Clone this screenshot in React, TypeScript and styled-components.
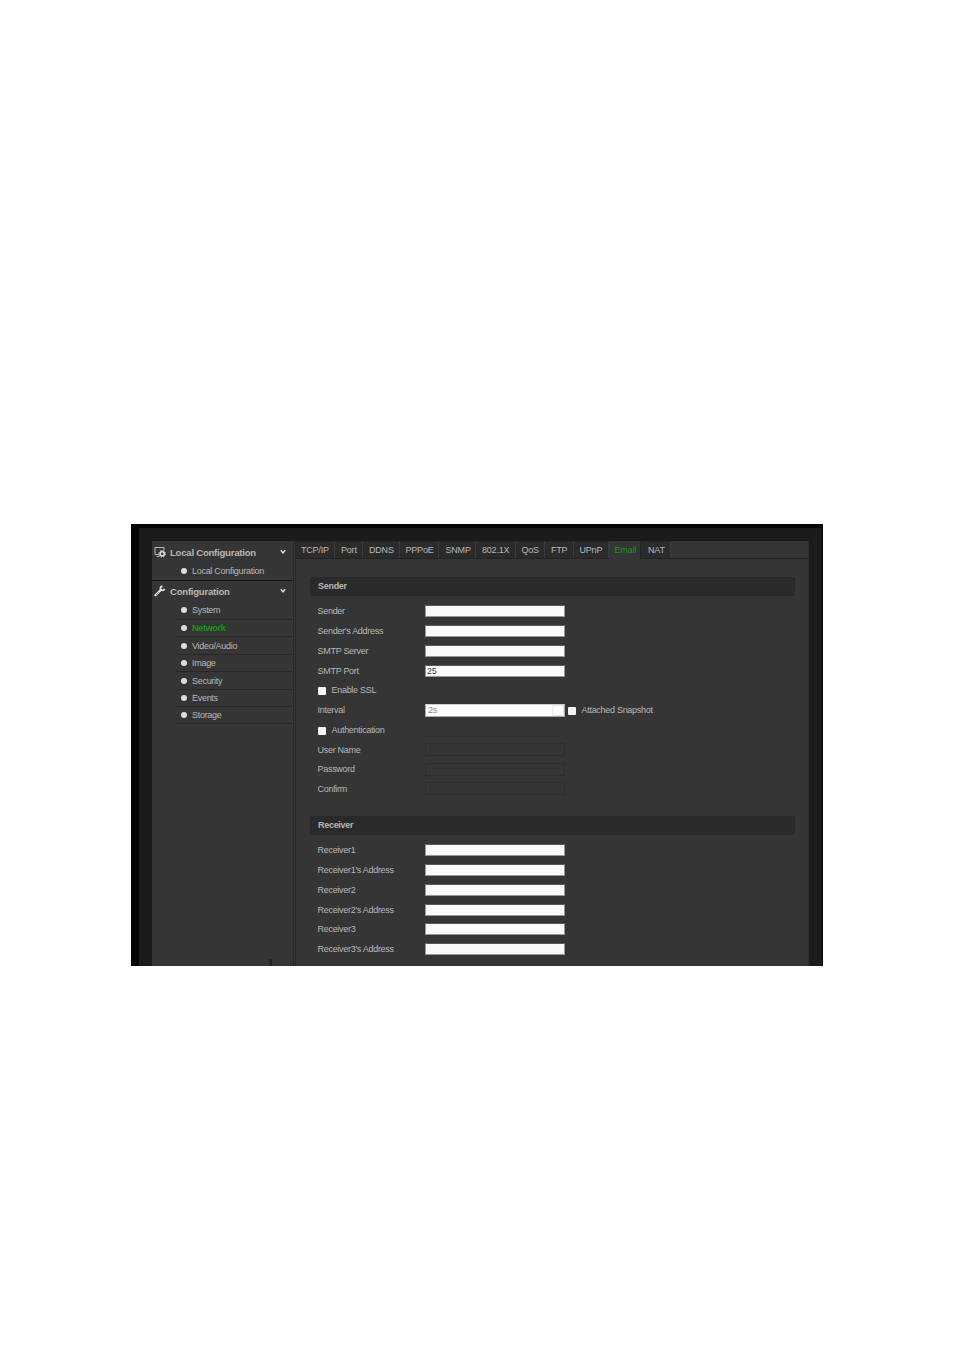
import React from 'react';
import styled, { createGlobalStyle } from 'styled-components';

const GlobalStyle = createGlobalStyle`
  *, *::before, *::after { box-sizing: border-box; }
  body { margin: 0; background: #fff; font-family: "Liberation Sans", Arial, sans-serif; font-size: 9px; letter-spacing: -0.29px; color: #b8b8b8; }
`;

const Page = styled.div`
  height: 1349px;
  padding: 524px 131px 0;
`;
const Frame = styled.div`
  width: 692px;
  height: 442px;
  padding: 4px 1px 0 8px;
  background: #030303;
`;
const Surround = styled.div`
  height: 438px;
  padding: 13px 13px 0;
  background: #1b1b1b;
`;
const Panel = styled.div`
  display: flex;
  height: 425px;
  background: #353535;
`;
const Sidebar = styled.nav`
  display: flex;
  flex-direction: column;
  width: 144px;
  border-right: 1px solid #292929;
  box-shadow: inset -1px 0 #353535, inset -2px 0 #2a2a2a;
`;
const Group = styled.div<{ $h: number }>`
  display: flex;
  align-items: center;
  height: ${p => p.$h}px;
  padding: 0 9px 0 2px;
  font-size: 9.6px;
  letter-spacing: -0.25px;
  font-weight: 700;
  white-space: nowrap;
  svg { flex: none; }
`;
const GroupTitle = styled.span`
  flex: 1;
  padding-left: 4px;
`;
const Item = styled.div<{ $h: number; $active?: boolean; $line?: string }>`
  display: flex;
  align-items: center;
  gap: 5px;
  height: ${p => p.$h}px;
  margin-left: 24px;
  margin-right: 3px;
  padding-left: 5px;
  border-bottom: 1px solid ${p => p.$line ?? '#272727'};
  color: ${p => (p.$active ? '#109a14' : '#b8b8b8')};
  font-weight: ${p => (p.$active ? 700 : 400)};
  white-space: nowrap;
  &::before {
    content: '';
    width: 6px;
    height: 6px;
    border-radius: 50%;
    background: #dedede;
  }
`;
const Separator = styled.div`
  height: 1px;
  margin-right: 3px;
  background: #161616;
`;
const Grip = styled.div`
  width: 3px;
  height: 7px;
  margin: auto 0 0 117px;
  background: #242424;
`;
const Main = styled.main`
  flex: 1;
  border-right: 1px solid #2c2c2c;
`;
const Tabs = styled.div`
  display: flex;
  height: 18px;
  border-bottom: 1px solid #222;
`;
const Tab = styled.div<{ $w: number; $pad: number; $active?: boolean }>`
  width: ${p => p.$w}px;
  height: ${p => (p.$active ? 18 : 17)}px;
  padding-left: ${p => p.$pad}px;
  line-height: 16px;
  letter-spacing: -0.2px;
  white-space: nowrap;
  background: ${p => (p.$active ? '#353535' : '#2b2b2b')};
  color: ${p => (p.$active ? '#109a14' : '#b8b8b8')};
  border-top: 1px solid ${p => (p.$active ? '#353535' : '#272727')};
  border-right: 1px solid ${p => (p.$active ? '#222' : '#3b3b3b')};
`;
const Content = styled.div`
  padding: 18px 13px 0 14px;
`;
const Heading = styled.h2`
  height: 19px;
  margin: 0;
  padding-left: 8px;
  background: #2a2a2a;
  font-size: 9px;
  line-height: 19px;
  font-weight: 700;
`;
const Rows = styled.div<{ $after?: number }>`
  padding: 5px 0 0 7.5px;
  margin-bottom: ${p => p.$after ?? 0}px;
`;
const Row = styled.div<{ $h: number }>`
  display: flex;
  align-items: center;
  height: ${p => p.$h}px;
  white-space: nowrap;
`;
const Label = styled.label`
  width: 107.5px;
`;
const Field = styled.input<{ $h?: number }>`
  width: 140px;
  height: ${p => p.$h ?? 12}px;
  padding: 0 0 0 1px;
  border: 1px solid #969696;
  border-top-color: #5a5a5a;
  border-radius: 0;
  background: #fafafa;
  color: #444;
  font: 9px "Liberation Sans", Arial, sans-serif;
  letter-spacing: -0.2px;
  &:disabled {
    background: transparent;
    border-color: #2e2e2e;
  }
`;
const Select = styled.div`
  display: flex;
  align-items: center;
  justify-content: space-between;
  width: 140px;
  height: 13px;
  padding-left: 2px;
  border: 1px solid #a9a9a9;
  border-top-color: #d0d0d0;
  background: #fff;
  color: #888;
  &::after {
    content: '';
    width: 12px;
    height: 11px;
    border: 1px solid #e6e6e6;
    border-radius: 2px;
  }
`;
const Check = styled.span<{ $left?: number }>`
  width: 8px;
  height: 8px;
  margin: 2px 5px 0 ${p => p.$left ?? 0}px;
  border-radius: 1px;
  background: #f4f4f4;
`;
const Caption = styled.span`
  padding-left: 0.5px;
`;

const Chevron = () => (
  <svg width="6" height="6" viewBox="0 0 6 6" fill="none" stroke="#e8e8e8" strokeWidth="1.3">
    <path d="M.8 1.2 3 4 5.2 1.2" />
  </svg>
);
const MonitorIcon = () => (
  <svg width="12" height="12" viewBox="0 0 12 12" fill="none">
    <path d="M5 8.5H1v-7h9v3" stroke="#b9b9b9" />
    <path d="M2.5 10.5h3" stroke="#aaa" />
    <circle cx="8.2" cy="7.8" r="2.1" stroke="#d4d4d4" strokeWidth="1.7" />
    <circle cx="8.2" cy="7.8" r="3.3" stroke="#d4d4d4" strokeWidth="1" strokeDasharray="1.3 1.3" />
  </svg>
);
const WrenchIcon = () => (
  <svg width="12" height="12" viewBox="0 0 12 12" fill="none">
    <path d="M1.5 10.3 7 4.8" stroke="#e9eef5" strokeWidth="2.2" strokeLinecap="round" />
    <path d="M8.6 1.3C6.7 1.3 6 2.8 6.5 4.2c.5 1.5 3 1.8 4.2-.2" stroke="#dce3ec" strokeWidth="1.7" />
    <path d="m2 10 3.2-3.2" stroke="#53657b" strokeWidth=".6" />
  </svg>
);

const tabs: [string, number, number][] = [
  ['TCP/IP', 39, 5], ['Port', 28, 6], ['DDNS', 37, 6], ['PPPoE', 39, 5.5], ['SNMP', 37, 6.5],
  ['802.1X', 40, 6], ['QoS', 29, 5.5], ['FTP', 29, 6], ['UPnP', 35, 5.5], ['Email', 32, 5.5], ['NAT', 30, 7],
];
const menu: [string, number][] = [
  ['System', 18], ['Network', 17], ['Video/Audio', 18], ['Image', 17], ['Security', 18], ['Events', 17], ['Storage', 17],
];
const receivers: [string, number][] = [
  ['Receiver1', 20], ["Receiver1's Address", 20], ['Receiver2', 20],
  ["Receiver2's Address", 19], ['Receiver3', 20], ["Receiver3's Address", 20],
];

export default function App() {
  return (
    <Page>
      <GlobalStyle />
      <Frame>
        <Surround>
          <Panel>
            <Sidebar>
              <Group $h={22}><MonitorIcon /><GroupTitle>Local Configuration</GroupTitle><Chevron /></Group>
              <Item $h={17} $line="transparent">Local Configuration</Item>
              <Separator />
              <Group $h={20}><WrenchIcon /><GroupTitle>Configuration</GroupTitle><Chevron /></Group>
              {menu.map(([name, h]) => (
                <Item key={name} $h={h + (name === 'System' ? 1 : 0)} $active={name === 'Network'}>{name}</Item>
              ))}
              <Grip />
            </Sidebar>
            <Main>
              <Tabs>
                {tabs.map(([name, w, pad]) => (
                  <Tab key={name} $w={w} $pad={pad} $active={name === 'Email'}>{name}</Tab>
                ))}
              </Tabs>
              <Content>
                <Heading>Sender</Heading>
                <Rows $after={18}>
                  <Row $h={20}><Label>Sender</Label><Field /></Row>
                  <Row $h={20}><Label>Sender's Address</Label><Field /></Row>
                  <Row $h={20}><Label>SMTP Server</Label><Field /></Row>
                  <Row $h={19}><Label>SMTP Port</Label><Field defaultValue="25" /></Row>
                  <Row $h={20}><Check $left={0.5} /><Caption>Enable SSL</Caption></Row>
                  <Row $h={20}>
                    <Label>Interval</Label><Select>2s</Select>
                    <Check $left={3} /><Caption>Attached Snapshot</Caption>
                  </Row>
                  <Row $h={20}><Check $left={0.5} /><Caption>Authentication</Caption></Row>
                  <Row $h={19}><Label>User Name</Label><Field disabled $h={13} /></Row>
                  <Row $h={20}><Label>Password</Label><Field disabled $h={13} /></Row>
                  <Row $h={19}><Label>Confirm</Label><Field disabled $h={13} /></Row>
                </Rows>
                <Heading>Receiver</Heading>
                <Rows>
                  {receivers.map(([name, h]) => (
                    <Row key={name} $h={h}><Label>{name}</Label><Field /></Row>
                  ))}
                </Rows>
              </Content>
            </Main>
          </Panel>
        </Surround>
      </Frame>
    </Page>
  );
}
